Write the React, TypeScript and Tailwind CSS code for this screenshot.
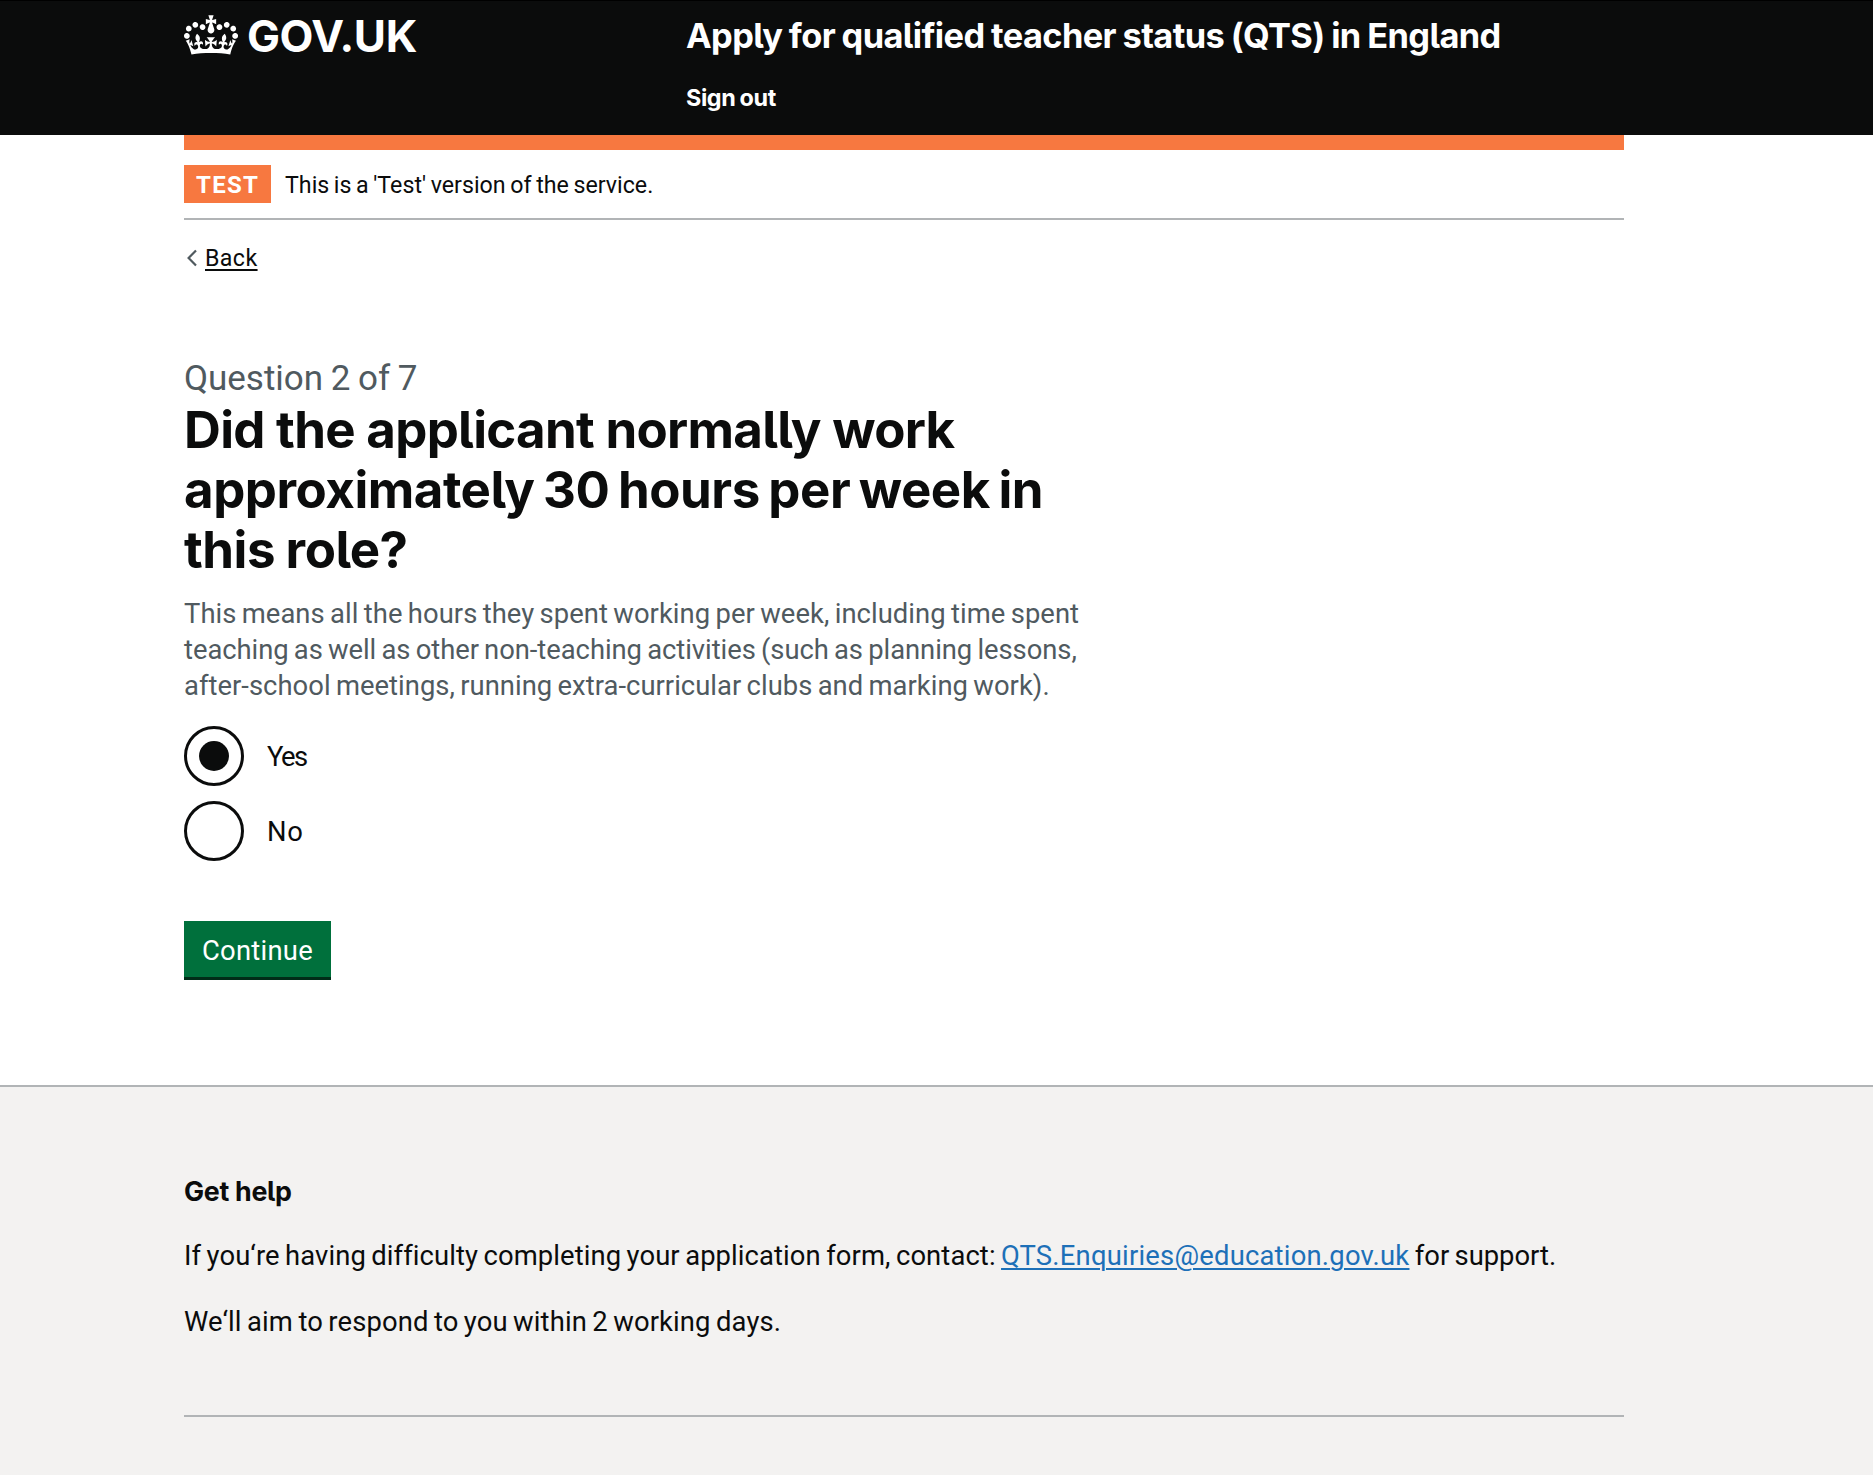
import type { ReactNode } from "react";

function Crown() {
  return (
    <svg viewBox="0 0 132 97" className="mt-[15px] h-[40px] w-[54px]" fill="currentColor" aria-hidden="true">
      <path d="M25 30.2c3.5 1.5 7.7-.2 9.1-3.7 1.5-3.6-.2-7.8-3.9-9.2-3.6-1.4-7.6.3-9.1 3.9-1.4 3.5.3 7.5 3.9 9zM9 39.5c3.6 1.5 7.8-.2 9.2-3.7 1.5-3.6-.2-7.8-3.9-9.1-3.6-1.5-7.6.2-9.1 3.8-1.4 3.5.3 7.5 3.8 9zM4.4 57.2c3.5 1.5 7.7-.2 9.1-3.8 1.5-3.6-.2-7.7-3.9-9.1-3.5-1.5-7.6.3-9.1 3.8-1.4 3.5.3 7.6 3.9 9.1zm38.3-21.4c3.5 1.5 7.7-.2 9.1-3.8 1.5-3.6-.2-7.7-3.9-9.1-3.6-1.5-7.6.3-9.1 3.8-1.3 3.6.4 7.7 3.9 9.1zm64.4-5.6c-3.6 1.5-7.8-.2-9.1-3.7-1.5-3.6.2-7.8 3.8-9.2 3.6-1.4 7.7.3 9.2 3.9 1.3 3.5-.4 7.5-3.9 9zm15.9 9.3c-3.6 1.5-7.7-.2-9.1-3.7-1.5-3.6.2-7.8 3.7-9.1 3.6-1.5 7.7.2 9.2 3.8 1.5 3.5-.3 7.5-3.8 9zm4.7 17.7c-3.6 1.5-7.8-.2-9.2-3.8-1.5-3.6.2-7.7 3.9-9.1 3.6-1.5 7.7.3 9.2 3.8 1.3 3.5-.4 7.6-3.9 9.1zM89.3 35.8c-3.6 1.5-7.8-.2-9.2-3.8-1.4-3.6.2-7.7 3.9-9.1 3.6-1.5 7.7.3 9.2 3.8 1.4 3.6-.3 7.7-3.9 9.1zM69.7 17.7l8.9 4.7V9.3l-8.9 2.8c-.2-.3-.5-.6-.9-.9L72.4 0H59.6l3.5 11.2c-.3.3-.6.5-.9.9l-8.8-2.8v13.1l8.8-4.7c.3.3.6.7.9.9l-5 15.4v.1c-.2.8-.4 1.6-.4 2.4 0 4.1 3.1 7.5 7 8.1h.2c.3 0 .7.1 1 .1.4 0 .7 0 1-.1h.2c4-.6 7.1-4.1 7.1-8.1 0-.8-.1-1.7-.4-2.4V34l-5.1-15.4c.4-.2.7-.6 1-.9zM66 92.8c16.9 0 32.8 1.1 47.1 3.2 4-16.9 8.9-26.7 14-33.5l-9.6-3.4c1 4.9 1.1 7.2 0 10.2-1.5-1.4-3-4.3-4.2-8.7L108.6 76c2.8-2 5-3.2 7.5-3.3-4.4 9.4-10 11.9-13.6 11.2-4.3-.8-6.3-4.6-5.6-7.9 1-4.7 5.7-5.9 8-.5 4.3-8.7-3-11.4-7.6-8.8 7.1-7.2 7.9-13.5 2.1-21.1-8 6.1-8.1 12.3-4.5 20.8-4.7-5.4-12.1-2.5-9.5 6.2 3.4-5.2 7.9-2 7.2 3.1-.6 4.3-6.4 7.8-13.5 7.2-10.3-.9-10.9-8-11.2-13.8 2.5-.5 7.1 1.8 11 7.3L80.2 60c-4.1 4.4-8 5.3-12.3 5.4 1.4-4.4 8-11.6 8-11.6H55.5s6.4 7.2 7.9 11.6c-4.2-.1-8-1-12.3-5.4l1.4 16.4c3.9-5.5 8.5-7.7 10.9-7.3-.3 5.8-.9 12.8-11.1 13.8-7.2.6-12.9-2.9-13.5-7.2-.7-5 3.8-8.3 7.1-3.1 2.7-8.7-4.6-11.6-9.4-6.2 3.7-8.5 3.6-14.7-4.6-20.8-5.8 7.6-5 13.9 2.2 21.1-4.7-2.6-11.9.1-7.7 8.8 2.3-5.5 7.1-4.2 8.1.5.7 3.3-1.3 7.1-5.7 7.9-3.5.7-9-1.8-13.5-11.2 2.5.1 4.7 1.3 7.5 3.3l-4.7-15.4c-1.2 4.4-2.7 7.2-4.3 8.7-1.1-3-.9-5.3 0-10.2l-9.5 3.4c5 6.9 9.9 16.7 14 33.5 14.8-2.1 30.8-3.2 47.7-3.2z" />
    </svg>
  );
}

function Container({ className = "", children }: { className?: string; children: ReactNode }) {
  return <div className={`ml-[184px] w-[1440px] ${className}`}>{children}</div>;
}

function Radio({ checked = false, children }: { checked?: boolean; children: ReactNode }) {
  return (
    <label className="flex h-[60px] items-center">
      <span className="flex size-[60px] items-center justify-center rounded-full border-[3px] border-[#0b0c0c]">
        {checked && <span className="size-[30px] rounded-full bg-[#0b0c0c]" />}
      </span>
      <span className="ml-[23px] pt-px text-[27.4px] leading-[60px]">{children}</span>
    </label>
  );
}

export default function App() {
  return (
    <div className="flex min-h-[1475px] flex-col whitespace-nowrap bg-white font-['Roboto',sans-serif] text-[#0b0c0c]">
      <header className="h-[135px] border-t border-black bg-[#0b0c0c] font-['Inter',sans-serif] text-white [font-feature-settings:'cv05']">
        <Container className="-mt-px flex">
          <a className="flex w-[502px]">
            <Crown />
            <span className="ml-[9px] mt-[16px] text-[44px] font-bold leading-[40px] tracking-[-0.4px]">GOV.UK</span>
          </a>
          <div className="pt-4">
            <div className="text-[34.4px] font-bold leading-[40px] tracking-[-0.61px] [word-spacing:-1px]">
              Apply for qualified teacher status (QTS) in England
            </div>
            <a className="mt-[27px] block text-[23.4px] font-bold leading-[30px] tracking-[-0.4px] [word-spacing:-1px]">
              Sign out
            </a>
          </div>
        </Container>
      </header>

      <Container>
        <div className="h-[15px] bg-[#f77840]" />
        <div className="flex h-[70px] items-start gap-[14px] border-b-2 border-[#b1b4b6] pt-[15px]">
          <strong className="h-[38px] w-[87px] bg-[#f77840] pl-[12px] text-[24px] leading-[40px] tracking-[1.3px] text-white">
            TEST
          </strong>
          <span className="text-[23.2px] leading-[40px] tracking-[0.02px] [word-spacing:-1.2px]">
            This is a 'Test' version of the service.
          </span>
        </div>
        <a className="mt-[23px] flex h-[30px] items-center">
          <svg viewBox="0 0 12 18" className="ml-[2px] h-[18px] w-[12px]" fill="none" stroke="#505a5f" strokeWidth="2.2">
            <path d="M10 1.4 2.6 9l7.4 7.6" />
          </svg>
          <span className="ml-[7px] text-[23.2px] leading-[30px] tracking-[0.4px] underline decoration-[1.5px] underline-offset-[2.5px]">
            Back
          </span>
        </a>

        <main className="pt-[86px]">
          <span className="block text-[35px] leading-[40px] tracking-[-0.03px] text-[#505a5f] [word-spacing:-1px]">
            Question 2 of 7
          </span>
          <h1 className="mt-px font-['Inter',sans-serif] text-[51px] font-bold leading-[60px] tracking-[-0.48px] [font-feature-settings:'cv05']">
            <span className="block tracking-[-0.7px]">Did the applicant normally work</span>
            <span className="block [word-spacing:-3px]">approximately 30 hours per week in</span>
            <span className="block [word-spacing:-1px]">this role?</span>
          </h1>
          <p className="mt-[16px] text-[27.4px] leading-[36px] text-[#505a5f] [word-spacing:-1.5px]">
            <span className="block tracking-[0.05px]">
              This means all the hours they spent working per week, including time spent
            </span>
            <span className="block tracking-[-0.05px]">
              teaching as well as other non-teaching activities (such as planning lessons,
            </span>
            <span className="block tracking-[0.03px]">
              after-school meetings, running extra-curricular clubs and marking work).
            </span>
          </p>
          <div className="mt-[22px] flex flex-col gap-[15px]">
            <Radio checked>
              <span className="tracking-[-1.5px]">Yes</span>
            </Radio>
            <Radio>
              <span className="tracking-[0.6px]">No</span>
            </Radio>
          </div>
          <button className="mt-[60px] block h-[59px] w-[147px] border-b-[3px] border-[#002d18] bg-[#00703c] pt-[2px] text-center text-[27.4px] leading-[56px] tracking-[0.25px] text-white">
            Continue
          </button>
        </main>
      </Container>

      <footer className="mt-[105px] grow border-t-2 border-[#b1b4b6] bg-[#f3f2f1]">
        <Container className="pt-[86px] text-[27.4px] leading-[36px]">
          <h2 className="font-['Inter',sans-serif] text-[26.8px] font-bold tracking-[-0.3px] [font-feature-settings:'cv05']">
            Get help
          </h2>
          <p className="mt-[29px] [word-spacing:-1.5px]">
            <span className="tracking-[0.1px]">
              If you‘re having difficulty completing your application form, contact:{" "}
            </span>
            <a className="tracking-[0.22px] text-[#1d70b8] underline decoration-[1.5px] underline-offset-[2.5px]">
              QTS.Enquiries@education.gov.uk
            </a>
            <span> for support.</span>
          </p>
          <p className="mt-[30px] tracking-[0.12px] [word-spacing:-1.5px]">
            We‘ll aim to respond to you within 2 working days.
          </p>
          <hr className="mt-[75px] border-t-2 border-[#b1b4b6]" />
        </Container>
      </footer>
    </div>
  );
}
